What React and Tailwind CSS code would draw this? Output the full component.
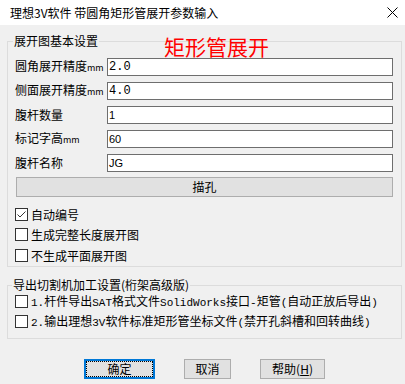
import React from 'react';

const L = ({ children }) => (
  <span className="font-['Liberation_Mono',monospace] text-[11px] leading-[12px]">{children}</span>
);

const Check = ({ checked, children, className = '', rowH = 'h-[20px]' }) => (
  <div className={`flex items-center ${rowH} ${className}`}>
    <div className="w-[13px] h-[13px] border border-[#333333] bg-white flex items-center justify-center shrink-0">
      {checked && (
        <svg width="11" height="11" viewBox="0 0 11 11">
          <polyline points="1.5,5.5 4,8 9.5,2.5" fill="none" stroke="#333333" strokeWidth="1" />
        </svg>
      )}
    </div>
    <span className="ml-[3px] whitespace-nowrap leading-[13px]">{children}</span>
  </div>
);

const Field = ({ label, unit, value, mono, className = '' }) => (
  <div className={`flex items-center h-[18px] ${className}`}>
    <div className="w-[92px] whitespace-nowrap">
      {label}
      {unit && <span className="text-[9px]">mm</span>}
    </div>
    <div
      className={`w-[286px] h-[18px] border border-[#6e6e6e] bg-white px-[1px] flex items-center ${
        mono ? "font-['Liberation_Mono',monospace] text-[12px]" : "font-['Liberation_Sans',sans-serif] text-[11px]"
      }`}
    >
      {value}
    </div>
  </div>
);

const Button = ({ children, className = '', focused }) =>
  focused ? (
    <div className={`h-[20px] border-2 border-[#0078d7] bg-[#e1e1e1] ${className}`}>
      <div className="w-full h-full border border-dotted border-black flex items-center justify-center">
        {children}
      </div>
    </div>
  ) : (
    <div className={`h-[20px] border border-[#adadad] bg-[#e1e1e1] flex items-center justify-center ${className}`}>
      {children}
    </div>
  );

export default function App() {
  return (
    <div className="w-[405px] h-[384px] bg-[#f0f0f0] flex flex-col text-[12px] leading-[14px] text-black font-['Noto_Sans_CJK_SC',sans-serif] overflow-hidden">
      {/* title bar */}
      <div className="h-[25px] bg-white flex items-center justify-between pl-[10px] pr-[7px] shrink-0">
        <span className="whitespace-nowrap">理想3V软件 带圆角矩形管展开参数输入</span>
        <svg width="11" height="11" viewBox="0 0 11 11">
          <line x1="0.5" y1="0.5" x2="10.5" y2="10.5" stroke="#000" strokeWidth="1" />
          <line x1="10.5" y1="0.5" x2="0.5" y2="10.5" stroke="#000" strokeWidth="1" />
        </svg>
      </div>

      <div className="pl-[7px] pt-[9px] flex flex-col">
        {/* group 1 */}
        <fieldset className="w-[395px] min-w-0 border border-[#dcdcdc] pl-[7px] pb-[1px]">
          <legend className="ml-[-2px] px-[1px] leading-[14px]">展开图基本设置</legend>
          <div className="-mt-[12px] h-[21px] pl-[149px] text-[21px] leading-[21px] text-[#ff0000] whitespace-nowrap">
            矩形管展开
          </div>
          <Field className="mt-[1px]" label="圆角展开精度" unit value="2.0" mono />
          <Field className="mt-[6px]" label="侧面展开精度" unit value="4.0" mono />
          <Field className="mt-[6px]" label="腹杆数量" value="1" />
          <Field className="mt-[6px]" label="标记字高" unit value="60" />
          <Field className="mt-[6px]" label="腹杆名称" value="JG" />
          <Button className="mt-[5px] ml-[1px] w-[377px]">描孔</Button>
          <Check className="mt-[7px]" checked>自动编号</Check>
          <Check>生成完整长度展开图</Check>
          <Check className="mt-[1px]">不生成平面展开图</Check>
        </fieldset>

        {/* group 2 */}
        <fieldset className="mt-[12px] w-[395px] min-w-0 border border-[#dcdcdc] pl-[7px] pb-[9px]">
          <legend className="ml-[-3px] px-[1px] leading-[12px]">导出切割机加工设置(桁架高级版)</legend>
          <Check rowH="h-[15px]" className="mt-[3px]">
            <L>1.</L>杆件导出<L>SAT</L>格式文件<L>SolidWorks</L>接口<L>-</L>矩管<L>(</L>自动正放后导出<L>)</L>
          </Check>
          <Check rowH="h-[15px]" className="mt-[5px]">
            <L>2.</L>输出理想<L>3V</L>软件标准矩形管坐标文件<L>(</L>禁开孔斜槽和回转曲线<L>)</L>
          </Check>
        </fieldset>

        {/* buttons */}
        <div className="mt-[20px] ml-[77px] flex gap-[29px]">
          <Button focused className="w-[71px]">确定</Button>
          <Button className="w-[47px]">取消</Button>
          <Button className="w-[65px]">
            帮助(<span className="underline">H</span>)
          </Button>
        </div>
      </div>
    </div>
  );
}
